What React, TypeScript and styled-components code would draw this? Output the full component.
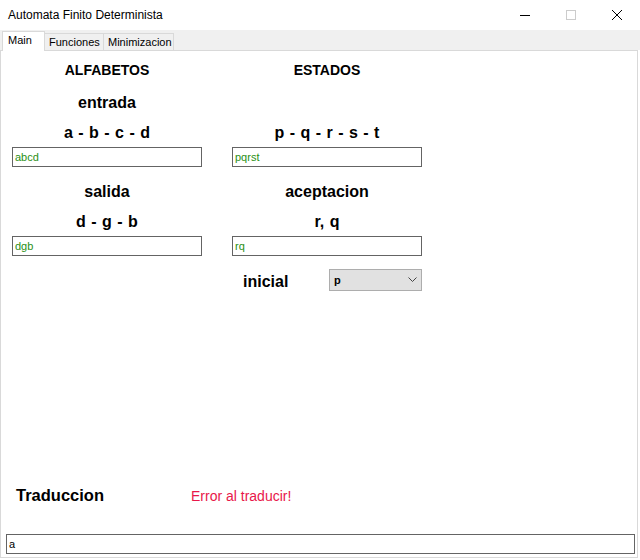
import { FC } from 'react'
import styled, { createGlobalStyle } from 'styled-components'

const GlobalStyle = createGlobalStyle`
  html, body {
    margin: 0;
    padding: 0;
    background: #ffffff;
  }
  * {
    box-sizing: border-box;
  }
`;

const Window = styled.div`
  width: 640px;
  height: 560px;
  background: #ffffff;
  display: flex;
  flex-direction: column;
  font-family: "Liberation Sans", Arial, sans-serif;
  overflow: hidden;
`;

const TitleBar = styled.div`
  height: 30px;
  display: flex;
  align-items: center;
  background: #ffffff;
`;

const Title = styled.span`
  flex: 1;
  padding-left: 8px;
  font-size: 12px;
  color: #000000;
`;

const Control = styled.div`
  width: 46px;
  height: 30px;
  display: flex;
  align-items: center;
  justify-content: center;
`;

const TabStrip = styled.div`
  height: 20px;
  background: #f0f0f0;
  display: flex;
  align-items: flex-end;
  padding-left: 2px;
`;

const Tab = styled.div<{ $active?: boolean; $width: number }>`
  width: ${({ $width }) => $width}px;
  height: ${({ $active }) => ($active ? 20 : 17)}px;
  background: ${({ $active }) => ($active ? '#ffffff' : '#f0f0f0')};
  border: 1px solid #d9d9d9;
  border-bottom: none;
  margin-bottom: ${({ $active }) => ($active ? -1 : 0)}px;
  position: relative;
  z-index: ${({ $active }) => ($active ? 1 : 0)};
  font-size: 11px;
  color: #000000;
  padding: ${({ $active }) => ($active ? '2px 0 0 5px' : '2px 0 0 4px')};
  & + & {
    border-left: ${({ $active }) => ($active ? '1px solid #d9d9d9' : 'none')};
  }
`;

const Panel = styled.div`
  flex: 1;
  margin: 0 2px 2px 0;
  border: 1px solid #d9d9d9;
  display: flex;
  flex-direction: column;
`;

const Form = styled.div`
  display: grid;
  grid-template-columns: 190px 190px;
  column-gap: 30px;
  padding: 4px 0 0 11px;
`;

const Column = styled.div`
  display: flex;
  flex-direction: column;
`;

const Heading = styled.div`
  height: 30px;
  line-height: 30px;
  text-align: center;
  font-size: 14px;
  font-weight: bold;
  color: #000000;
`;

const Section = styled.div<{ $gap: number }>`
  display: flex;
  flex-direction: column;
  margin-top: ${({ $gap }) => $gap}px;
`;

const Label = styled.div`
  height: 29px;
  line-height: 30px;
  text-align: center;
  font-size: 16px;
  font-weight: bold;
  color: #000000;
`;

const Symbols = styled.div`
  height: 30px;
  line-height: 31px;
  text-align: center;
  font-size: 16px;
  font-weight: bold;
  word-spacing: 1px;
  color: #000000;
`;

const Field = styled.div<{ $color?: string }>`
  height: 20px;
  border: 1px solid #646464;
  background: #ffffff;
  padding-left: 2px;
  font-size: 11px;
  line-height: 18px;
  color: ${({ $color }) => $color || '#000000'};
`;

const InicialRow = styled.div`
  display: flex;
  align-items: center;
  height: 22px;
  margin-top: 13px;
`;

const InicialLabel = styled.div`
  width: 97px;
  padding: 4px 0 0 11px;
  font-size: 16px;
  font-weight: bold;
  color: #000000;
`;

const Select = styled.div`
  width: 93px;
  height: 22px;
  background: #e1e1e1;
  border: 1px solid #adadad;
  display: flex;
  align-items: center;
  justify-content: space-between;
  padding: 0 4px 0 4px;
  font-size: 11px;
  font-weight: bold;
  color: #000000;
`;

const Spacer = styled.div`
  flex: 1;
`;

const ResultRow = styled.div`
  display: flex;
  align-items: baseline;
  height: 24px;
  padding-left: 15px;
`;

const ResultTitle = styled.div`
  width: 175px;
  font-size: 16.5px;
  font-weight: bold;
  color: #000000;
`;

const ErrorText = styled.div`
  font-size: 14px;
  color: #e8174a;
`;

const OutputField = styled(Field)`
  margin: 24px 2px 3px 5px;
`;

const Chevron: FC = () => (
  <svg width="9" height="6" viewBox="0 0 9 6">
    <path d="M0.5 0.5 L4.5 4.5 L8.5 0.5" fill="none" stroke="#444" strokeWidth="1" />
  </svg>
);

const GREEN = '#2a8f14';

const App: FC = () => {
  return (
    <>
      <GlobalStyle />
      <Window>
        <TitleBar>
          <Title>Automata Finito Determinista</Title>
          <Control>
            <svg width="10" height="10" viewBox="0 0 10 10">
              <path d="M0 5.5 H10" stroke="#000" strokeWidth="1" />
            </svg>
          </Control>
          <Control>
            <svg width="10" height="10" viewBox="0 0 10 10">
              <rect x="0.5" y="0.5" width="9" height="9" fill="none" stroke="#cccccc" strokeWidth="1" />
            </svg>
          </Control>
          <Control>
            <svg width="10" height="10" viewBox="0 0 10 10">
              <path d="M0 0 L10 10 M10 0 L0 10" stroke="#000" strokeWidth="1" />
            </svg>
          </Control>
        </TitleBar>

        <TabStrip>
          <Tab $active $width={43}>Main</Tab>
          <Tab $width={59}>Funciones</Tab>
          <Tab $width={70}>Minimizacion</Tab>
        </TabStrip>

        <Panel>
          <Form>
            <Column>
              <Heading>ALFABETOS</Heading>
              <Section $gap={3}>
                <Label>entrada</Label>
                <Symbols>a - b - c - d</Symbols>
                <Field $color={GREEN}>abcd</Field>
              </Section>
              <Section $gap={10}>
                <Label>salida</Label>
                <Symbols>d - g - b</Symbols>
                <Field $color={GREEN}>dgb</Field>
              </Section>
            </Column>

            <Column>
              <Heading>ESTADOS</Heading>
              <Section $gap={3}>
                <Label></Label>
                <Symbols>p - q - r - s - t</Symbols>
                <Field $color={GREEN}>pqrst</Field>
              </Section>
              <Section $gap={10}>
                <Label>aceptacion</Label>
                <Symbols>r, q</Symbols>
                <Field $color={GREEN}>rq</Field>
              </Section>
              <InicialRow>
                <InicialLabel>inicial</InicialLabel>
                <Select>
                  <span>p</span>
                  <Chevron />
                </Select>
              </InicialRow>
            </Column>
          </Form>

          <Spacer />

          <ResultRow>
            <ResultTitle>Traduccion</ResultTitle>
            <ErrorText>Error al traducir!</ErrorText>
          </ResultRow>
          <OutputField>a</OutputField>
        </Panel>
      </Window>
    </>
  )
}

export default App
